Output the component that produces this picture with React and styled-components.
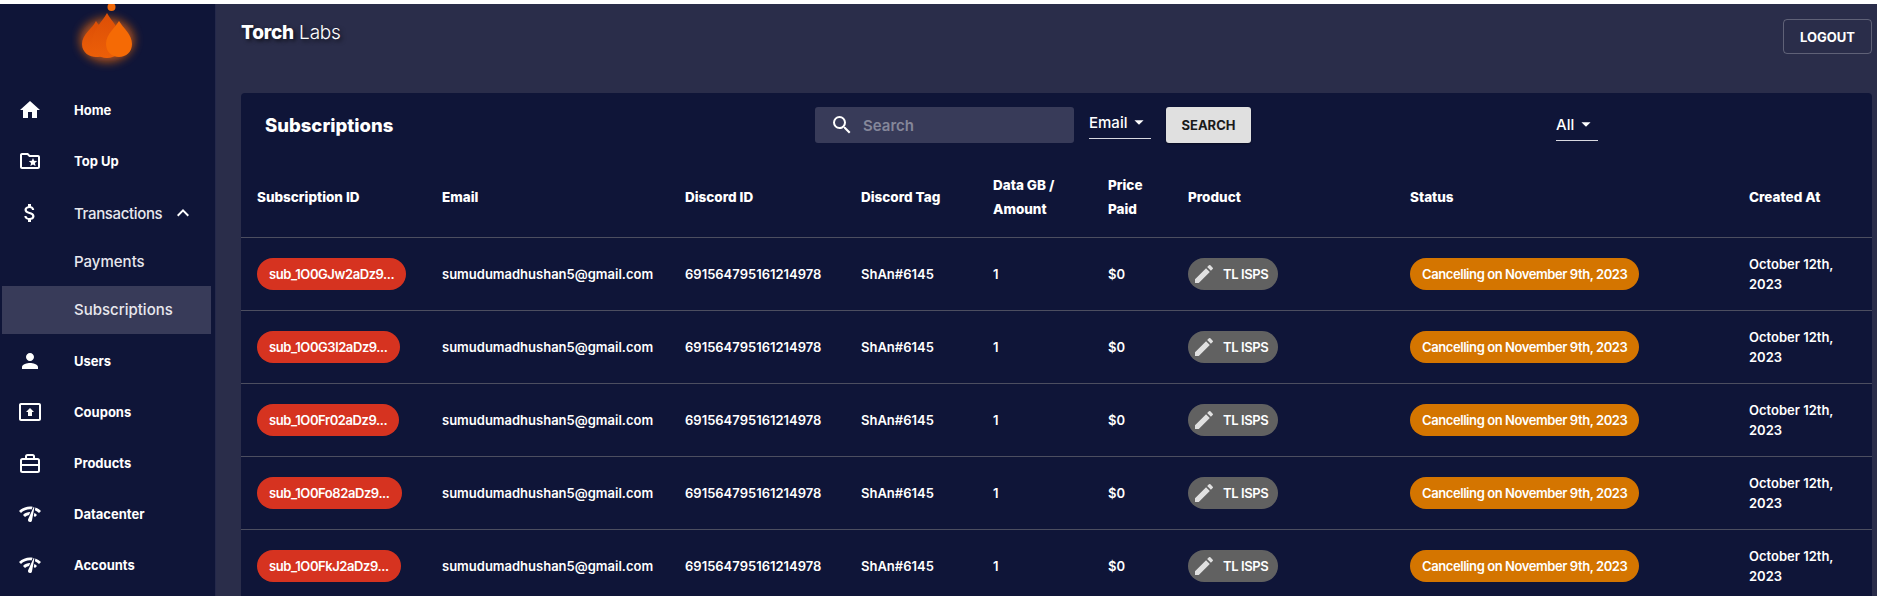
import styled, { createGlobalStyle } from "styled-components";
import {
  MdHome,
  MdOutlineFolderSpecial,
  MdAttachMoney,
  MdExpandLess,
  MdPerson,
  MdOutlinePresentToAll,
  MdNetworkCheck,
  MdEdit,
  MdSearch,
  MdArrowDropDown,
} from "react-icons/md";

const GlobalStyle = createGlobalStyle`
  html, body {
    margin: 0;
    height: 100%;
    overflow: hidden;
    background: #fff;
  }
  body {
    font-family: Inter, "Open Sans", sans-serif;
    color: #fff;
  }
`;

const Page = styled.div`
  display: flex;
  height: 592px;
  margin-top: 4px;
  overflow: hidden;
  background: #2a2d4a;
`;

const Sidebar = styled.aside`
  width: 216px;
  flex-shrink: 0;
  background: #0f1538;
  border-right: 1px solid #24284a;
  box-sizing: border-box;
`;

const LogoBox = styled.div`
  height: 80px;
  padding-left: 72px;
`;

const NavItem = styled.div`
  height: ${(props) => (props.$sub ? "48px" : "51px")};
  width: 209px;
  margin-left: 2px;
  display: flex;
  align-items: center;
  box-sizing: border-box;
  padding-left: ${(props) => (props.$sub ? "72px" : "0")};
  padding-bottom: ${(props) => (props.$sub ? "2px" : "0")};
  background: ${(props) => (props.$active ? "#383b59" : "transparent")};
  margin-bottom: ${(props) => (props.$active ? "1px" : "0")};
`;

const TransactionsItem = styled(NavItem)`
  height: 52px;
  padding-top: 2px;
`;

const NavIcon = styled.span`
  width: 72px;
  padding-left: 16px;
  box-sizing: border-box;
  display: flex;
  font-size: 24px;
`;

const NavLabel = styled.span`
  font-size: ${(props) => (props.$big ? "15px" : "13px")};
  font-weight: ${(props) => (props.$big ? 500 : 700)};
  color: ${(props) => (props.$big ? "#e8e8ee" : "#fff")};
  letter-spacing: ${(props) => (props.$tight ? "-0.35px" : "0")};
`;

const Caret = styled.span`
  display: flex;
  font-size: 24px;
  margin-left: 9px;
`;

const Main = styled.main`
  flex: 1;
  min-width: 0;
  padding: 0 5px 0 25px;
`;

const Header = styled.header`
  height: 89px;
  display: flex;
  justify-content: space-between;
  align-items: flex-start;
`;

const Brand = styled.div`
  font-size: 19px;
  line-height: 22px;
  margin-top: 18px;
  font-weight: 300;
  letter-spacing: -0.2px;
  text-shadow: 2px 2px 4px rgba(0, 0, 0, 0.7);
  strong {
    font-weight: 800;
  }
`;

const LogoutButton = styled.button`
  margin-top: 15px;
  width: 89px;
  height: 35px;
  border: 1px solid rgba(255, 255, 255, 0.25);
  border-radius: 4px;
  background: transparent;
  color: #fff;
  font: 700 13px Inter, sans-serif;
`;

const Panel = styled.section`
  background: #0f1538;
  border-radius: 4px 4px 0 0;
  height: 520px;
  overflow: hidden;
`;

const Toolbar = styled.div`
  display: grid;
  grid-template-columns: 574px 259px 15px 62px 15px 85px 305px 42px;
  height: 64px;
  align-items: center;
`;

const PanelTitle = styled.h2`
  margin: 0 0 0 24px;
  font-size: 18.5px;
  font-weight: 800;
`;

const SearchBox = styled.div`
  grid-column: 2;
  height: 36px;
  background: #383b59;
  border-radius: 3px;
  display: flex;
  align-items: center;
  padding-left: 15px;
  gap: 9px;
  font-size: 15px;
  font-weight: 600;
  color: #85879a;
  svg {
    font-size: 24px;
    color: #fff;
  }
`;

const Select = styled.div`
  grid-column: ${(props) => props.$col};
  height: 32px;
  margin-bottom: ${(props) => (props.$low ? "0" : "4px")};
  box-sizing: border-box;
  border-bottom: 1px solid #d8d8e0;
  display: flex;
  align-items: center;
  font-size: 15px;
  font-weight: 500;
  padding-bottom: 1px;
  svg {
    font-size: 22px;
    margin-left: 1px;
  }
`;

const SearchButton = styled.button`
  grid-column: 6;
  height: 36px;
  border: none;
  border-radius: 3px;
  background: #e0e0e0;
  color: #1a1a1a;
  font: 700 13px Inter, sans-serif;
  box-shadow: 0 1px 2px rgba(0, 0, 0, 0.4);
`;

const Table = styled.table`
  width: 100%;
  table-layout: fixed;
  border-collapse: collapse;
`;

const Th = styled.th`
  height: 80px;
  padding: 0 16px;
  text-align: left;
  font-size: 13.5px;
  line-height: 24px;
  font-weight: 800;
  border-bottom: 1px solid #4c4e60;
`;

const Td = styled.td`
  height: 72px;
  padding: 0 16px;
  font-size: 13px;
  line-height: 20px;
  font-weight: 600;
  border-bottom: 1px solid #4c4e60;
`;

const Chip = styled.span`
  display: inline-flex;
  align-items: center;
  height: 32px;
  padding: 0 12px;
  border-radius: 16px;
  white-space: nowrap;
  font-size: 13px;
  font-weight: 600;
  letter-spacing: -0.42px;
  background: ${(props) => props.$bg};
`;

const ProductChip = styled(Chip)`
  padding-right: 10px;
  svg {
    font-size: 24px;
    margin: 0 7px 0 -8px;
    color: #e0e0e0;
  }
`;

const BriefcaseIcon = () => (
  <svg width="1em" height="1em" viewBox="0 0 24 24" fill="none" stroke="currentColor" strokeWidth="2">
    <path d="M8 8V5.5A1.5 1.5 0 0 1 9.5 4h5A1.5 1.5 0 0 1 16 5.5V8" />
    <rect x="3" y="8" width="18" height="13" rx="1.5" />
    <path d="M3 14h18" />
  </svg>
);

const NAV_TOP = [
  { label: "Home", icon: <MdHome /> },
  { label: "Top Up", icon: <MdOutlineFolderSpecial /> },
];

const NAV_BOTTOM = [
  { label: "Users", icon: <MdPerson /> },
  { label: "Coupons", icon: <MdOutlinePresentToAll /> },
  { label: "Products", icon: <BriefcaseIcon /> },
  { label: "Datacenter", icon: <MdNetworkCheck /> },
  { label: "Accounts", icon: <MdNetworkCheck /> },
];

const COLUMNS = [
  { title: "Subscription ID", width: 185 },
  { title: "Email", width: 243 },
  { title: "Discord ID", width: 176 },
  { title: "Discord Tag", width: 132 },
  { title: "Data GB / Amount", width: 115 },
  { title: "Price Paid", width: 80 },
  { title: "Product", width: 222 },
  { title: "Status", width: 339 },
  { title: "Created At" },
];

const SUBS = [
  "sub_1O0GJw2aDz9...",
  "sub_1O0G3l2aDz9...",
  "sub_1O0Fr02aDz9...",
  "sub_1O0Fo82aDz9...",
  "sub_1O0FkJ2aDz9...",
];

const Logo = () => (
  <svg width="72" height="80" viewBox="0 0 72 80">
    <defs>
      <filter id="glow" x="-50%" y="-50%" width="200%" height="200%">
        <feGaussianBlur stdDeviation="5" />
      </filter>
      <linearGradient id="flame" x1="0" y1="0" x2="0" y2="1">
        <stop offset="0" stopColor="#dc4e06" />
        <stop offset="1" stopColor="#ec5f08" />
      </linearGradient>
    </defs>
    <circle cx="39.5" cy="3" r="4" fill="#f26a0a" />
    <g filter="url(#glow)" opacity="0.7">
      <ellipse cx="35" cy="36" rx="27" ry="22" fill="#f26a0a" />
    </g>
    <path d="M24 17c3 6 14 12 14 23s-8 13-14 13-14-4-14-13c0-10 11-16 14-23z" fill="url(#flame)" />
    <path d="M35 9c4 8 15 17 15 30 0 10-7 15-15 15s-15-5-15-15c0-13 11-22 15-30z" fill="url(#flame)" />
    <path d="M47 17c4 7 13 13 13 23 0 8-6 13-13 13s-13-5-13-13c0-10 9-16 13-23z" fill="#f56a05" />
  </svg>
);

const App = () => {
  return (
    <>
      <GlobalStyle />
      <Page>
        <Sidebar>
          <LogoBox>
            <Logo />
          </LogoBox>
          {NAV_TOP.map((item) => (
            <NavItem key={item.label}>
              <NavIcon>{item.icon}</NavIcon>
              <NavLabel>{item.label}</NavLabel>
            </NavItem>
          ))}
          <TransactionsItem>
            <NavIcon>
              <MdAttachMoney />
            </NavIcon>
            <NavLabel $big $tight>
              Transactions
            </NavLabel>
            <Caret>
              <MdExpandLess />
            </Caret>
          </TransactionsItem>
          <NavItem $sub>
            <NavLabel $big>Payments</NavLabel>
          </NavItem>
          <NavItem $sub $active>
            <NavLabel $big>Subscriptions</NavLabel>
          </NavItem>
          {NAV_BOTTOM.map((item) => (
            <NavItem key={item.label}>
              <NavIcon>{item.icon}</NavIcon>
              <NavLabel>{item.label}</NavLabel>
            </NavItem>
          ))}
        </Sidebar>
        <Main>
          <Header>
            <Brand>
              <strong>Torch</strong> Labs
            </Brand>
            <LogoutButton>LOGOUT</LogoutButton>
          </Header>
          <Panel>
            <Toolbar>
              <PanelTitle>Subscriptions</PanelTitle>
              <SearchBox>
                <MdSearch />
                Search
              </SearchBox>
              <Select $col={4}>
                Email
                <MdArrowDropDown />
              </Select>
              <SearchButton>SEARCH</SearchButton>
              <Select $col={8} $low>
                All
                <MdArrowDropDown />
              </Select>
            </Toolbar>
            <Table>
              <colgroup>
                {COLUMNS.map((col) => (
                  <col key={col.title} width={col.width} />
                ))}
              </colgroup>
              <thead>
                <tr>
                  {COLUMNS.map((col) => (
                    <Th key={col.title}>{col.title}</Th>
                  ))}
                </tr>
              </thead>
              <tbody>
                {SUBS.map((sub) => (
                  <tr key={sub}>
                    <Td>
                      <Chip $bg="#d63320">{sub}</Chip>
                    </Td>
                    <Td>sumudumadhushan5@gmail.com</Td>
                    <Td>691564795161214978</Td>
                    <Td>ShAn#6145</Td>
                    <Td>1</Td>
                    <Td>$0</Td>
                    <Td>
                      <ProductChip $bg="#616161">
                        <MdEdit />
                        TL ISPS
                      </ProductChip>
                    </Td>
                    <Td>
                      <Chip $bg="#d47500">Cancelling on November 9th, 2023</Chip>
                    </Td>
                    <Td>October 12th, 2023</Td>
                  </tr>
                ))}
              </tbody>
            </Table>
          </Panel>
        </Main>
      </Page>
    </>
  );
};

export default App;
